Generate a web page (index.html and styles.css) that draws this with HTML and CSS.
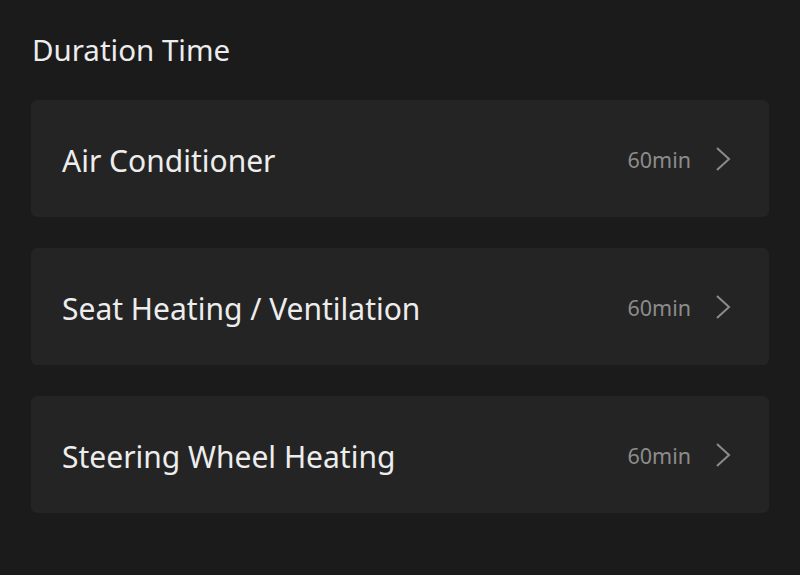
FILE: index.html
```html
<!DOCTYPE html>
<html lang="en">
<head>
  <meta charset="UTF-8" />
  <meta name="viewport" content="width=device-width, initial-scale=1.0"/>
  <title>Duration Time</title>
  <link rel="stylesheet" href="styles.css">
</head>
<body>
  <h2 class="title">Duration Time</h2>

  <div class="list">
    <div class="item">
      <span class="label">Air Conditioner</span>
      <span class="value">60min</span>
      <svg class="chevron" viewBox="0 0 16 26" width="16" height="26"><path d="M2 2 L14 13 L2 24" /></svg>
    </div>
    <div class="item">
      <span class="label">Seat Heating / Ventilation</span>
      <span class="value">60min</span>
      <svg class="chevron" viewBox="0 0 16 26" width="16" height="26"><path d="M2 2 L14 13 L2 24" /></svg>
    </div>
    <div class="item">
      <span class="label">Steering Wheel Heating</span>
      <span class="value">60min</span>
      <svg class="chevron" viewBox="0 0 16 26" width="16" height="26"><path d="M2 2 L14 13 L2 24" /></svg>
    </div>
  </div>
</body>
</html>
```

FILE: styles.css
```css
body {
  font-family: 'Noto Sans', sans-serif;
  background-color: #1b1b1b;
  margin: 0;
  padding: 30px 31px 0 31px;
  color: #ececec;
}

.title {
  font-size: 29.5px;
  font-weight: normal;
  margin: 0 0 0 1px;
  line-height: 40px;
}

.list {
  margin-top: 30px;
  display: flex;
  flex-direction: column;
  gap: 31px;
}

.item {
  display: flex;
  align-items: center;
  height: 117px;
  padding: 0 38px 0 31px;
  background-color: #242424;
  border-radius: 6px;
}

.label {
  flex: 1;
  font-size: 30px;
  color: #ededed;
  padding-top: 3px;
}

.value {
  font-size: 21.5px;
  color: #8c8c8c;
  margin-right: 24px;
  padding-top: 2px;
}

.chevron {
  fill: none;
  stroke: #8c8c8c;
  stroke-width: 2;
}
```
